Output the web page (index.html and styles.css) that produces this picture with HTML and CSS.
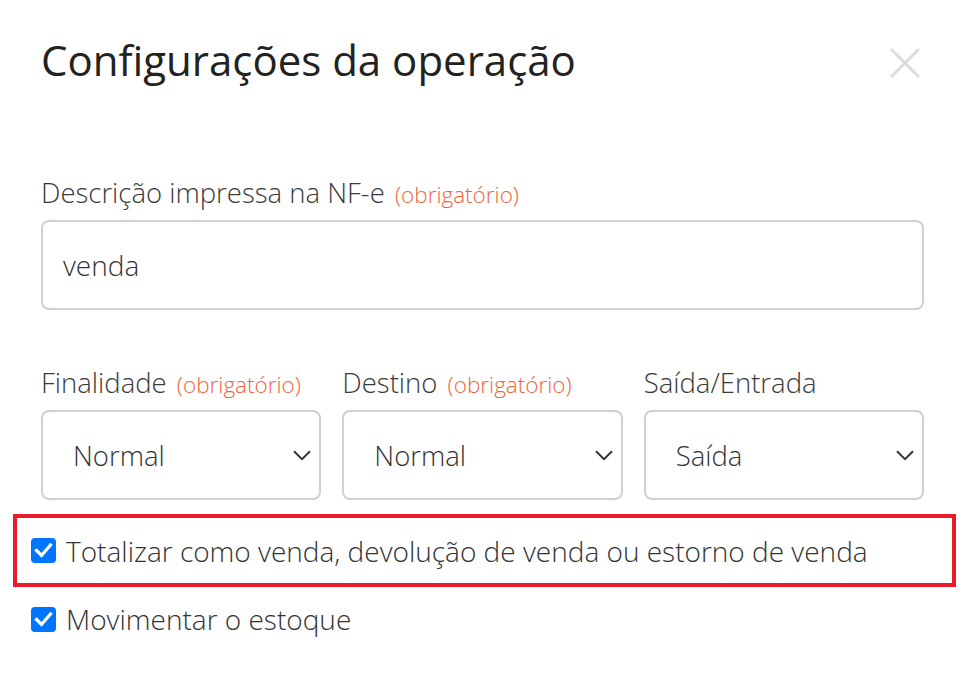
FILE: index.html
```html
<!DOCTYPE html>
<html lang="pt-BR">
<head>
<meta charset="utf-8">
<title>Configurações da operação</title>
<link rel="stylesheet" href="styles.css">
</head>
<body>
<div class="modal">
  <div class="modal-header">
    <h1 class="modal-title">Configurações da operação</h1>
    <button class="close-btn" aria-label="Fechar">
      <svg width="32" height="32" viewBox="0 0 32 32"><path d="M2 2 L30 30 M30 2 L2 30" stroke="#dcdcdc" stroke-width="3" fill="none"/></svg>
    </button>
  </div>

  <div class="field field-desc">
    <label class="label">Descrição impressa na NF-e <span class="req">(obrigatório)</span></label>
    <div class="input">venda</div>
  </div>

  <div class="row">
    <div class="field">
      <label class="label">Finalidade <span class="req">(obrigatório)</span></label>
      <div class="select"><span>Normal</span><svg class="chev" width="18" height="11" viewBox="0 0 18 11"><path d="M1 1.2 L9 9.2 L17 1.2" stroke="#333" stroke-width="2" fill="none"/></svg></div>
    </div>
    <div class="field">
      <label class="label">Destino <span class="req">(obrigatório)</span></label>
      <div class="select"><span>Normal</span><svg class="chev" width="18" height="11" viewBox="0 0 18 11"><path d="M1 1.2 L9 9.2 L17 1.2" stroke="#333" stroke-width="2" fill="none"/></svg></div>
    </div>
    <div class="field">
      <label class="label">Saída/Entrada</label>
      <div class="select"><span>Saída</span><svg class="chev" width="18" height="11" viewBox="0 0 18 11"><path d="M1 1.2 L9 9.2 L17 1.2" stroke="#333" stroke-width="2" fill="none"/></svg></div>
    </div>
  </div>

  <div class="highlight">
    <label class="check"><span class="box"><svg width="25" height="25" viewBox="0 0 25 25"><rect x="0" y="0" width="25" height="25" rx="4" fill="#0075ff"/><path d="M5.5 12.5 L10.5 17.5 L19.5 7" stroke="#fff" stroke-width="3.2" fill="none" stroke-linecap="square"/></svg></span>Totalizar como venda, devolução de venda ou estorno de venda</label>
  </div>
  <label class="check check-2"><span class="box"><svg width="25" height="25" viewBox="0 0 25 25"><rect x="0" y="0" width="25" height="25" rx="4" fill="#0075ff"/><path d="M5.5 12.5 L10.5 17.5 L19.5 7" stroke="#fff" stroke-width="3.2" fill="none" stroke-linecap="square"/></svg></span>Movimentar o estoque</label>
</div>
</body>
</html>
```
FILE: styles.css
```css
html, body {
  margin: 0;
  padding: 0;
  background: #fff;
}
body {
  font-family: "Open Sans", "Liberation Sans", sans-serif;
  color: #333;
}
.modal {
  width: 974px;
  box-sizing: border-box;
  padding: 34px 50px 0 41px;
}
.modal-header {
  display: flex;
  justify-content: space-between;
  align-items: flex-start;
}
.modal-title {
  margin: 0;
  font-size: 42px;
  line-height: 52px;
  font-weight: 400;
  color: #222;
}
.close-btn {
  border: 0;
  background: none;
  padding: 0;
  margin: 13px 3px 0 0;
  width: 32px;
  height: 32px;
}
.close-btn svg { display: block; }
.field-desc {
  margin-top: 89px;
}
.label {
  display: block;
  height: 36px;
  font-size: 27.5px;
  line-height: 36px;
  font-weight: 300;
  color: #3a3a3a;
  margin-bottom: 9px;
  white-space: nowrap;
}
.req {
  font-size: 22.5px;
  line-height: 1;
  font-weight: 300;
  color: #f0643c;
  margin-left: 3px;
}
.input {
  height: 90px;
  box-sizing: border-box;
  border: 2px solid #d0d0d0;
  border-radius: 8px;
  padding-left: 20px;
  font-size: 28px;
  font-weight: 300;
  line-height: 86px;
  color: #333;
}
.row {
  margin-top: 55px;
  display: grid;
  grid-template-columns: repeat(3, 1fr);
  column-gap: 21px;
}
.select {
  height: 90px;
  box-sizing: border-box;
  border: 2px solid #d0d0d0;
  border-radius: 8px;
  padding: 0 8px 0 30px;
  display: flex;
  align-items: center;
  justify-content: space-between;
  font-size: 27.5px;
  font-weight: 300;
  color: #333;
}
.chev { display: block; }
.highlight {
  margin: 14px 0 0 -28px;
  width: 943px;
  height: 73px;
  box-sizing: border-box;
  border: 4px solid #ea1c2a;
  display: flex;
  align-items: center;
  padding-left: 14px;
}
.check {
  display: flex;
  align-items: center;
  font-size: 28px;
  font-weight: 300;
  color: #333;
  line-height: 36px;
}
.box {
  display: block;
  width: 25px;
  height: 25px;
  margin-right: 10px;
}
.box svg { display: block; }
.check-2 {
  margin: 14px 0 0 -10px;
}
```
